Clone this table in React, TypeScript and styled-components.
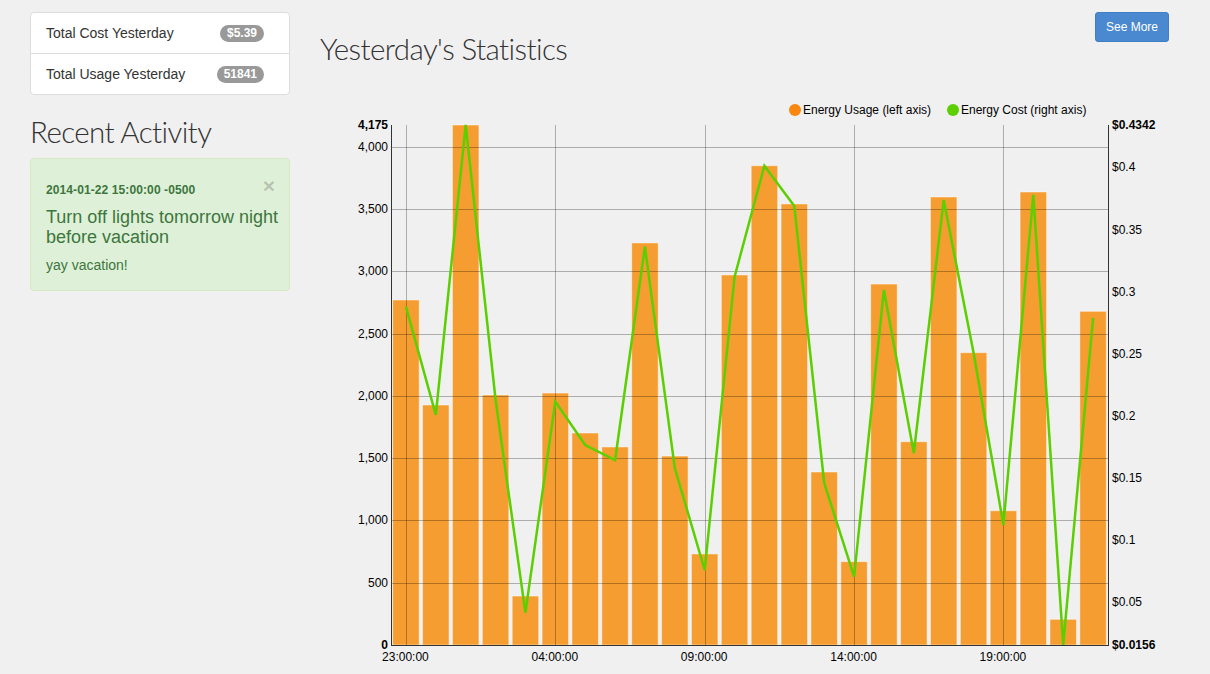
import { createGlobalStyle, styled } from 'styled-components';

const GlobalStyle = createGlobalStyle`
  html, body {
    margin: 0;
    padding: 0;
    background: #f0f0f0;
    overflow: hidden;
  }
  body {
    font-family: "Liberation Sans", Arial, sans-serif;
    font-size: 14px;
    line-height: 20px;
    color: #333;
  }
`;

const Page = styled.div`
  display: grid;
  grid-template-columns: 260px 849px;
  column-gap: 30px;
  padding: 12px 0 0 30px;
  height: 662px;
`;

const Sidebar = styled.aside`
  display: flex;
  flex-direction: column;
`;

const ListGroup = styled.ul`
  margin: 0;
  padding: 0;
  list-style: none;
  background: #fff;
  border: 1px solid #ddd;
  border-radius: 4px;
`;

const ListItem = styled.li`
  display: flex;
  align-items: center;
  justify-content: space-between;
  padding: 10px 25px 10px 15px;
  & + & {
    border-top: 1px solid #ddd;
  }
`;

const Badge = styled.span`
  display: inline-block;
  min-width: 10px;
  padding: 0 7px;
  font-size: 12px;
  font-weight: bold;
  line-height: 17px;
  color: #fff;
  background: #999;
  border-radius: 9px;
`;

const SectionTitle = styled.h1`
  margin: 20px 0 10px;
  font-family: Lato, "Liberation Sans", sans-serif;
  font-weight: 300;
  font-size: 29.5px;
  line-height: 33px;
  letter-spacing: -0.6px;
  color: #333;
`;

const Alert = styled.div`
  position: relative;
  padding: 15px 8px 15px 15px;
  background: #dff0d8;
  border: 1px solid #d6e9c6;
  border-radius: 4px;
  color: #3c763d;
`;

const AlertDate = styled.h6`
  margin: 10px 0 10px;
  font-size: 12px;
  line-height: 13px;
  font-weight: bold;
  letter-spacing: 0.1px;
`;

const AlertTitle = styled.h4`
  margin: 0 0 8px;
  font-size: 18px;
  font-weight: normal;
  line-height: 20px;
`;

const AlertBody = styled.p`
  margin: 0;
`;

const CloseButton = styled.button`
  position: absolute;
  top: 16px;
  right: 14px;
  padding: 0;
  border: 0;
  background: transparent;
  font-family: "Liberation Sans", Arial, sans-serif;
  font-size: 21px;
  font-weight: bold;
  line-height: 1;
  color: rgba(0, 0, 0, 0.2);
  cursor: pointer;
`;

const Main = styled.main`
  display: flex;
  flex-direction: column;
`;

const MainHeader = styled.div`
  display: flex;
  justify-content: space-between;
  align-items: flex-start;
`;

const SeeMoreButton = styled.button`
  padding: 5px 10px;
  font-family: "Liberation Sans", Arial, sans-serif;
  font-size: 12px;
  line-height: 18px;
  color: #fff;
  background: #4a89d0;
  border: 1px solid #3f7fc4;
  border-radius: 3px;
  cursor: pointer;
`;

const ChartSvg = styled.svg`
  display: block;
  margin-top: 15px;
  font-family: "Liberation Sans", Arial, sans-serif;
  font-size: 12px;
  fill: #000;
`;

const usage = [
  2770, 1927, 4175, 2007, 393, 2023, 1702, 1590, 3228, 1517, 731, 2971, 3848, 3541, 1389, 669,
  2898, 1632, 3597, 2347, 1078, 3637, 206, 2679,
];
const cost = [
  0.2879, 0.2008, 0.4342, 0.2128, 0.0416, 0.2115, 0.1766, 0.1645, 0.3362, 0.1581, 0.076, 0.3121,
  0.4014, 0.369, 0.146, 0.0706, 0.3014, 0.1702, 0.3738, 0.2506, 0.1122, 0.3779, 0.0156, 0.2788,
];

const W = 849;
const H = 584;
const L = 71;
const R = 788;
const T = 35;
const B = 555;
const band = (R - L) / usage.length;
const uMax = 4175;
const cMin = 0.0156;
const cMax = 0.4342;

const yU = (v: number) => B - (v / uMax) * (B - T);
const yC = (v: number) => B - ((v - cMin) / (cMax - cMin)) * (B - T);
const xc = (i: number) => L + (i + 0.5) * band;

const hourLabel = (i: number) => `${String((23 + i) % 24).padStart(2, '0')}:00:00`;

const UsageChart = () => {
  const leftTicks = [500, 1000, 1500, 2000, 2500, 3000, 3500, 4000];
  const rightTicks = [0.05, 0.1, 0.15, 0.2, 0.25, 0.3, 0.35, 0.4];
  const xTicks = [0, 5, 10, 15, 20];
  const linePts = cost.map((c, i) => `${xc(i).toFixed(1)},${yC(c).toFixed(1)}`).join(' ');

  return (
    <ChartSvg width={W} height={H}>
      {/* legend */}
      <circle cx={475} cy={20} r={6} fill="#f8860f" />
      <text x={483} y={20} dominantBaseline="central">
        Energy Usage (left axis)
      </text>
      <circle cx={633} cy={20} r={6} fill="#5ccf00" />
      <text x={641} y={20} dominantBaseline="central">
        Energy Cost (right axis)
      </text>

      {/* bars */}
      {usage.map((u, i) => (
        <rect
          key={i}
          x={L + i * band + 1.7}
          y={yU(u)}
          width={band - 3.4}
          height={B - yU(u)}
          fill="#f59d31"
          stroke="rgba(255,255,255,0.45)"
          strokeWidth={1}
        />
      ))}

      {/* grid */}
      {leftTicks.map((t) => (
        <line key={t} x1={L} x2={R} y1={Math.round(yU(t)) + 0.5} y2={Math.round(yU(t)) + 0.5} stroke="rgba(0,0,0,0.28)" />
      ))}
      {xTicks.map((i) => (
        <line key={i} x1={Math.round(xc(i)) + 0.5} x2={Math.round(xc(i)) + 0.5} y1={T} y2={B} stroke="rgba(0,0,0,0.28)" />
      ))}

      {/* cost line */}
      <polyline points={linePts} fill="none" stroke="#5ccf00" strokeWidth={2.5} strokeLinejoin="miter" />

      {/* axes */}
      <line x1={L + 0.5} x2={L + 0.5} y1={T} y2={B} stroke="#333" />
      <line x1={R + 0.5} x2={R + 0.5} y1={T} y2={B} stroke="#333" />
      <line x1={L} x2={R + 1} y1={B + 0.5} y2={B + 0.5} stroke="#333" />

      {/* left axis labels */}
      {leftTicks.map((t) => (
        <text key={t} x={68} y={yU(t)} textAnchor="end" dominantBaseline="central">
          {t.toLocaleString('en-US')}
        </text>
      ))}
      <text x={68} y={T} textAnchor="end" dominantBaseline="central" fontWeight="bold">
        4,175
      </text>
      <text x={68} y={B} textAnchor="end" dominantBaseline="central" fontWeight="bold">
        0
      </text>

      {/* right axis labels */}
      {rightTicks.map((t) => (
        <text key={t} x={792} y={yC(t)} dominantBaseline="central">
          ${t}
        </text>
      ))}
      <text x={792} y={T} dominantBaseline="central" fontWeight="bold">
        $0.4342
      </text>
      <text x={792} y={B} dominantBaseline="central" fontWeight="bold">
        $0.0156
      </text>

      {/* x axis labels */}
      {xTicks.map((i) => (
        <text key={i} x={xc(i) - 0.5} y={567} textAnchor="middle" dominantBaseline="central">
          {hourLabel(i)}
        </text>
      ))}
    </ChartSvg>
  );
};

const App = () => {
  return (
    <>
      <GlobalStyle />
      <Page>
        <Sidebar>
          <ListGroup>
            <ListItem>
              Total Cost Yesterday
              <Badge>$5.39</Badge>
            </ListItem>
            <ListItem>
              Total Usage Yesterday
              <Badge>51841</Badge>
            </ListItem>
          </ListGroup>
          <SectionTitle>Recent Activity</SectionTitle>
          <Alert>
            <CloseButton aria-label="Close">×</CloseButton>
            <AlertDate>2014-01-22 15:00:00 -0500</AlertDate>
            <AlertTitle>Turn off lights tomorrow night before vacation</AlertTitle>
            <AlertBody>yay vacation!</AlertBody>
          </Alert>
        </Sidebar>
        <Main>
          <MainHeader>
            <SectionTitle>Yesterday's Statistics</SectionTitle>
            <SeeMoreButton>See More</SeeMoreButton>
          </MainHeader>
          <UsageChart />
        </Main>
      </Page>
    </>
  );
};

export default App;
